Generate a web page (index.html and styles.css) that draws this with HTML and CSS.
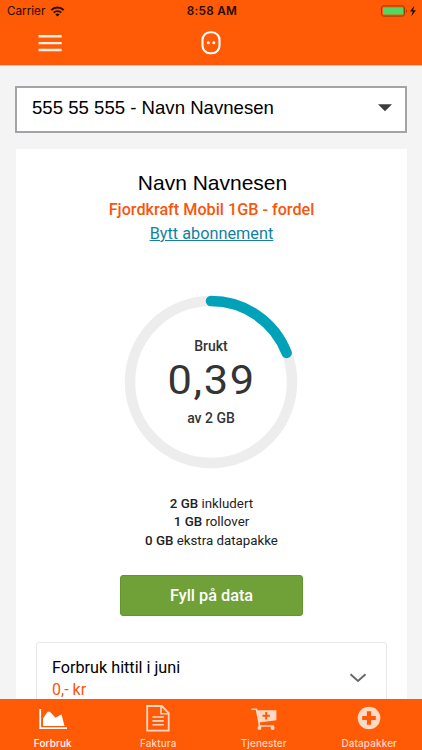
FILE: index.html
```html
<!DOCTYPE html>
<html lang="no">
<head>
  <meta charset="UTF-8" />
  <meta name="viewport" content="width=device-width, initial-scale=1.0"/>
  <title>Forbruk</title>
  <link rel="stylesheet" href="styles.css">
</head>
<body>
  <header class="header">
    <div class="status-bar">
      <div class="carrier">
        <span>Carrier</span>
        <svg width="15" height="11" viewBox="0 0 14 11">
          <path d="M0.8 4.2A8.6 8.6 0 0 1 13.2 4.2M3.2 6.7A5.4 5.4 0 0 1 10.8 6.7" fill="none" stroke="#260d00" stroke-width="1.9"/>
          <path d="M7 10.6L4.9 8.6A3 3 0 0 1 9.1 8.6Z" fill="#260d00"/>
        </svg>
      </div>
      <div class="clock">8:58 AM</div>
      <div class="battery">
        <svg width="36" height="12" viewBox="0 0 36 12">
          <rect x="0.5" y="0.9" width="23" height="10.2" rx="2" fill="none" stroke="#9c3a04"/>
          <rect x="2" y="2.4" width="20" height="7.2" rx="0.8" fill="#4cd964"/>
          <path d="M25 4.2Q27 6 25 7.8Z" fill="#9c3a04"/>
          <path d="M33.2 0.8L29 6.6H31.6L30.4 11.2L35 5.2H32.2Z" fill="#260d00"/>
        </svg>
      </div>
    </div>
    <div class="nav-bar">
      <button class="menu-btn" aria-label="Meny">
        <svg width="24" height="18" viewBox="0 0 24 18"><path d="M0.5 2.2H23.7M0.5 9.1H23.7M0.5 16H23.7" stroke="#fff0e6" stroke-width="2.4"/></svg>
      </button>
      <svg class="logo" width="20" height="24" viewBox="0 0 20 24">
        <rect x="1.5" y="1.3" width="17" height="21" rx="7.5" fill="none" stroke="#fff" stroke-width="2.1"/>
        <circle cx="7.3" cy="11.7" r="1.5" fill="#fff"/>
        <circle cx="12.8" cy="11.7" r="1.5" fill="#fff"/>
      </svg>
    </div>
  </header>

  <main class="content">
    <div class="select">
      <span>555 55 555 - Navn Navnesen</span>
      <svg width="14" height="8" viewBox="0 0 14 8"><path d="M0 0.3H14L7 7.3Z" fill="#3c3f40"/></svg>
    </div>

    <section class="card">
      <h1 class="name">Navn Navnesen</h1>
      <div class="plan">Fjordkraft Mobil 1GB - fordel</div>
      <a class="change-link" href="#">Bytt abonnement</a>

      <div class="gauge">
        <svg class="gauge-ring" width="174" height="174" viewBox="0 0 174 174">
          <circle cx="87" cy="87" r="81" fill="none" stroke="#ededed" stroke-width="10.5"/>
          <path d="M87 6A81 81 0 0 1 162.6 57.9" fill="none" stroke="#00a2ba" stroke-width="10.5" stroke-linecap="round"/>
        </svg>
        <div class="gauge-text">
          <div class="gauge-label">Brukt</div>
          <div class="gauge-value">0,39</div>
          <div class="gauge-label">av 2 GB</div>
        </div>
      </div>

      <ul class="details">
        <li><b>2 GB</b> inkludert</li>
        <li><b>1 GB</b> rollover</li>
        <li><b>0 GB</b> ekstra datapakke</li>
      </ul>

      <button class="fill-btn">Fyll på data</button>

      <div class="usage">
        <div>
          <div class="usage-title">Forbruk hittil i juni</div>
          <div class="usage-sum">0,- kr</div>
        </div>
        <svg width="18" height="10" viewBox="0 0 18 10"><path d="M1.5 1.2L9 8L16.5 1.2" fill="none" stroke="#676767" stroke-width="1.9"/></svg>
      </div>
    </section>
  </main>

  <nav class="tab-bar">
    <a class="tab active" href="#">
      <svg width="28" height="28" viewBox="0 0 28 28">
        <path d="M1.2 4V23.2H28" fill="none" stroke="currentColor" stroke-width="1.8"/>
        <path d="M4 21V13.5L8.5 6.8H11L16.5 12.8L22.5 9.2L25.5 21Z" fill="currentColor"/>
      </svg>
      <span>Forbruk</span>
    </a>
    <a class="tab" href="#">
      <svg width="28" height="28" viewBox="0 0 28 28">
        <path d="M3.2 1H17.8L24.7 8V25.6H3.2Z" fill="none" stroke="currentColor" stroke-width="1.8"/>
        <path d="M17 1V8.7H24.7M8.4 12H19.8M8.4 15.9H19.8M8.4 19.8H19.8" fill="none" stroke="currentColor" stroke-width="1.6"/>
      </svg>
      <span>Faktura</span>
    </a>
    <a class="tab" href="#">
      <svg width="28" height="28" viewBox="0 0 28 28">
        <path d="M1.5 4.2H6.4L9.3 18.5V21H24" fill="none" stroke="currentColor" stroke-width="1.6"/>
        <path d="M6.6 5.2H26.4V15.3L9 17.6Z" fill="currentColor"/>
        <path d="M16.2 7V14.4M12.5 10.7H19.9" stroke="#ff5a05" stroke-width="2"/>
        <circle cx="9.4" cy="22.9" r="2" fill="currentColor"/>
        <circle cx="22.6" cy="22.9" r="2" fill="currentColor"/>
      </svg>
      <span>Tjenester</span>
    </a>
    <a class="tab" href="#">
      <svg width="28" height="28" viewBox="0 0 28 28">
        <circle cx="14" cy="13" r="11.3" fill="currentColor"/>
        <path d="M14 6.2V19.8M7.2 13H20.8" stroke="#ff5a05" stroke-width="4.2"/>
      </svg>
      <span>Datapakker</span>
    </a>
  </nav>
</body>
</html>
```

FILE: styles.css
```css
* {
  box-sizing: border-box;
}

body {
  margin: 0;
  height: 100vh;
  display: flex;
  flex-direction: column;
  overflow: hidden;
  font-family: Roboto, sans-serif;
  background-color: #f4f4f4;
  color: #222;
}

.header {
  flex: none;
  height: 66px;
  background-color: #ff5a05;
  border-bottom: 1px solid #ffc5a6;
}

.status-bar {
  display: grid;
  grid-template-columns: 1fr auto 1fr;
  align-items: center;
  height: 22px;
  padding: 0 5px 0 7px;
  font-family: Inter, sans-serif;
  font-size: 11.7px;
  color: #260d00;
}

.carrier {
  display: flex;
  align-items: center;
  gap: 5px;
}

.carrier svg,
.battery svg {
  display: block;
}

.clock {
  font-weight: 600;
  letter-spacing: 0.3px;
}

.battery {
  justify-self: end;
}

.nav-bar {
  display: grid;
  grid-template-columns: 1fr auto 1fr;
  align-items: center;
  height: 42px;
  padding: 0 38px;
}

.menu-btn {
  justify-self: start;
  display: flex;
  padding: 0;
  border: none;
  background: none;
}

.content {
  flex: 1;
  min-height: 0;
  overflow: hidden;
  padding: 20px 15px 0;
}

.select {
  display: flex;
  justify-content: space-between;
  align-items: center;
  height: 47px;
  padding: 0 13px 4px 15px;
  border: 2px solid #a3a4a8;
  background-color: #fff;
  font-family: "Liberation Sans", Arial, sans-serif;
  font-size: 18.6px;
  color: #000;
}

.card {
  display: flex;
  flex-direction: column;
  align-items: center;
  margin: 16px 0 0 1px;
  padding: 21px 20px 0;
  background-color: #fff;
}

.name {
  margin: 0 0 0 2px;
  font-family: "Liberation Sans", Arial, sans-serif;
  font-size: 21px;
  font-weight: 400;
  line-height: 26px;
  color: #000;
}

.plan {
  margin-top: 2px;
  font-size: 16.2px;
  font-weight: 500;
  line-height: 24px;
  color: #f9560d;
}

.change-link {
  font-size: 16.3px;
  line-height: 24px;
  color: #147fa3;
}

.gauge {
  display: grid;
  margin: 49px 1px 0 0;
}

.gauge-ring,
.gauge-text {
  grid-area: 1 / 1;
}

.gauge-text {
  display: flex;
  flex-direction: column;
  align-items: center;
  padding-top: 41px;
  color: #333436;
}

.gauge-label {
  font-size: 14px;
  font-weight: 500;
  line-height: 20px;
}

.gauge-value {
  margin: -2px -1.5px 2px 0;
  font-size: 41px;
  line-height: 52px;
  letter-spacing: 1.5px;
  transform: scaleX(1.06);
}

.details {
  list-style: none;
  margin: 26px 0 0;
  padding: 0;
  text-align: center;
  font-size: 13.3px;
  line-height: 18.3px;
}

.details b {
  font-weight: 500;
}

.fill-btn {
  flex: none;
  width: 183px;
  height: 41px;
  margin-top: 25px;
  padding: 0;
  border: 1px solid #65942e;
  border-radius: 3px;
  background-color: #70a038;
  font-family: inherit;
  font-size: 16.3px;
  font-weight: 500;
  color: #fff;
}

.usage {
  align-self: stretch;
  display: flex;
  justify-content: space-between;
  align-items: center;
  height: 72px;
  margin-top: 26px;
  padding: 2px 19px 0 15px;
  border: 1px solid #e8e8e8;
  border-radius: 3px;
}

.usage svg {
  margin-bottom: 2px;
}

.usage-title {
  font-size: 16.2px;
  line-height: 22px;
  color: #000;
}

.usage-sum {
  font-size: 16px;
  line-height: 22px;
  color: #f9560d;
}

.tab-bar {
  flex: none;
  display: grid;
  grid-template-columns: repeat(4, 1fr);
  height: 51px;
  padding-top: 6px;
  background-color: #ff5a05;
}

.tab {
  display: flex;
  flex-direction: column;
  align-items: center;
  font-family: Inter, sans-serif;
  font-size: 10px;
  font-weight: 500;
  line-height: 20px;
  letter-spacing: 0.1px;
  text-decoration: none;
  color: #ffd9c3;
}

.tab svg {
  flex: none;
}

.tab.active {
  color: #fff;
}
```
